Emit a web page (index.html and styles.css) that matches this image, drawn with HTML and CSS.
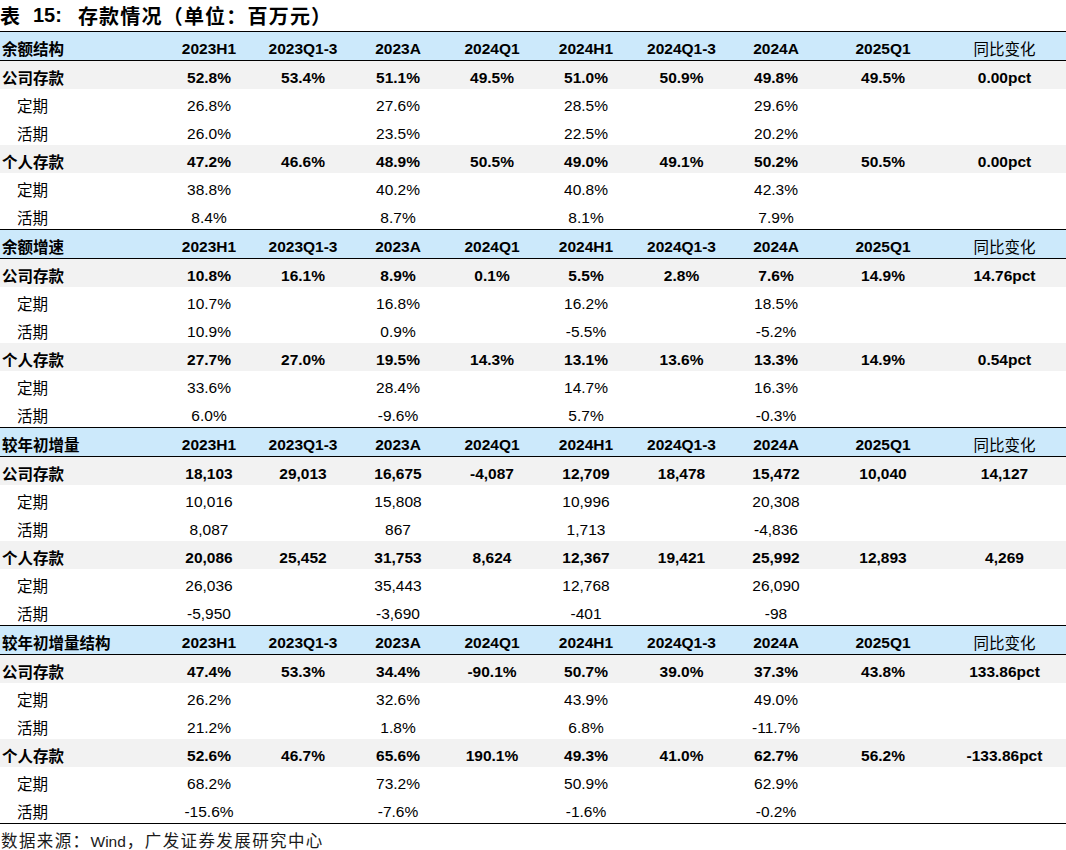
FILE: index.html
```html
<!DOCTYPE html>
<html lang="zh">
<head>
<meta charset="utf-8">
<title>存款情况</title>
<link rel="stylesheet" href="styles.css">
</head>
<body>
<div class="page">
  <div class="title"><span class="t-k">表</span><span class="t-n">15:</span><span class="t-t">存款情况（单位：百万元）</span></div>
  <div class="table">
    <div class="section">
      <div class="row head"><div class="lab">余额结构</div><div>2023H1</div><div>2023Q1-3</div><div>2023A</div><div>2024Q1</div><div>2024H1</div><div>2024Q1-3</div><div>2024A</div><div>2025Q1</div><div class="cjk">同比变化</div></div>
      <div class="row main"><div class="lab">公司存款</div><div>52.8%</div><div>53.4%</div><div>51.1%</div><div>49.5%</div><div>51.0%</div><div>50.9%</div><div>49.8%</div><div>49.5%</div><div>0.00pct</div></div>
      <div class="row sub"><div class="lab">定期</div><div>26.8%</div><div></div><div>27.6%</div><div></div><div>28.5%</div><div></div><div>29.6%</div><div></div><div></div></div>
      <div class="row sub"><div class="lab">活期</div><div>26.0%</div><div></div><div>23.5%</div><div></div><div>22.5%</div><div></div><div>20.2%</div><div></div><div></div></div>
      <div class="row main"><div class="lab">个人存款</div><div>47.2%</div><div>46.6%</div><div>48.9%</div><div>50.5%</div><div>49.0%</div><div>49.1%</div><div>50.2%</div><div>50.5%</div><div>0.00pct</div></div>
      <div class="row sub"><div class="lab">定期</div><div>38.8%</div><div></div><div>40.2%</div><div></div><div>40.8%</div><div></div><div>42.3%</div><div></div><div></div></div>
      <div class="row sub"><div class="lab">活期</div><div>8.4%</div><div></div><div>8.7%</div><div></div><div>8.1%</div><div></div><div>7.9%</div><div></div><div></div></div>
    </div>
    <div class="section">
      <div class="row head"><div class="lab">余额增速</div><div>2023H1</div><div>2023Q1-3</div><div>2023A</div><div>2024Q1</div><div>2024H1</div><div>2024Q1-3</div><div>2024A</div><div>2025Q1</div><div class="cjk">同比变化</div></div>
      <div class="row main"><div class="lab">公司存款</div><div>10.8%</div><div>16.1%</div><div>8.9%</div><div>0.1%</div><div>5.5%</div><div>2.8%</div><div>7.6%</div><div>14.9%</div><div>14.76pct</div></div>
      <div class="row sub"><div class="lab">定期</div><div>10.7%</div><div></div><div>16.8%</div><div></div><div>16.2%</div><div></div><div>18.5%</div><div></div><div></div></div>
      <div class="row sub"><div class="lab">活期</div><div>10.9%</div><div></div><div>0.9%</div><div></div><div>-5.5%</div><div></div><div>-5.2%</div><div></div><div></div></div>
      <div class="row main"><div class="lab">个人存款</div><div>27.7%</div><div>27.0%</div><div>19.5%</div><div>14.3%</div><div>13.1%</div><div>13.6%</div><div>13.3%</div><div>14.9%</div><div>0.54pct</div></div>
      <div class="row sub"><div class="lab">定期</div><div>33.6%</div><div></div><div>28.4%</div><div></div><div>14.7%</div><div></div><div>16.3%</div><div></div><div></div></div>
      <div class="row sub"><div class="lab">活期</div><div>6.0%</div><div></div><div>-9.6%</div><div></div><div>5.7%</div><div></div><div>-0.3%</div><div></div><div></div></div>
    </div>
    <div class="section">
      <div class="row head"><div class="lab">较年初增量</div><div>2023H1</div><div>2023Q1-3</div><div>2023A</div><div>2024Q1</div><div>2024H1</div><div>2024Q1-3</div><div>2024A</div><div>2025Q1</div><div class="cjk">同比变化</div></div>
      <div class="row main"><div class="lab">公司存款</div><div>18,103</div><div>29,013</div><div>16,675</div><div>-4,087</div><div>12,709</div><div>18,478</div><div>15,472</div><div>10,040</div><div>14,127</div></div>
      <div class="row sub"><div class="lab">定期</div><div>10,016</div><div></div><div>15,808</div><div></div><div>10,996</div><div></div><div>20,308</div><div></div><div></div></div>
      <div class="row sub"><div class="lab">活期</div><div>8,087</div><div></div><div>867</div><div></div><div>1,713</div><div></div><div>-4,836</div><div></div><div></div></div>
      <div class="row main"><div class="lab">个人存款</div><div>20,086</div><div>25,452</div><div>31,753</div><div>8,624</div><div>12,367</div><div>19,421</div><div>25,992</div><div>12,893</div><div>4,269</div></div>
      <div class="row sub"><div class="lab">定期</div><div>26,036</div><div></div><div>35,443</div><div></div><div>12,768</div><div></div><div>26,090</div><div></div><div></div></div>
      <div class="row sub"><div class="lab">活期</div><div>-5,950</div><div></div><div>-3,690</div><div></div><div>-401</div><div></div><div>-98</div><div></div><div></div></div>
    </div>
    <div class="section">
      <div class="row head"><div class="lab">较年初增量结构</div><div>2023H1</div><div>2023Q1-3</div><div>2023A</div><div>2024Q1</div><div>2024H1</div><div>2024Q1-3</div><div>2024A</div><div>2025Q1</div><div class="cjk">同比变化</div></div>
      <div class="row main"><div class="lab">公司存款</div><div>47.4%</div><div>53.3%</div><div>34.4%</div><div>-90.1%</div><div>50.7%</div><div>39.0%</div><div>37.3%</div><div>43.8%</div><div>133.86pct</div></div>
      <div class="row sub"><div class="lab">定期</div><div>26.2%</div><div></div><div>32.6%</div><div></div><div>43.9%</div><div></div><div>49.0%</div><div></div><div></div></div>
      <div class="row sub"><div class="lab">活期</div><div>21.2%</div><div></div><div>1.8%</div><div></div><div>6.8%</div><div></div><div>-11.7%</div><div></div><div></div></div>
      <div class="row main"><div class="lab">个人存款</div><div>52.6%</div><div>46.7%</div><div>65.6%</div><div>190.1%</div><div>49.3%</div><div>41.0%</div><div>62.7%</div><div>56.2%</div><div>-133.86pct</div></div>
      <div class="row sub"><div class="lab">定期</div><div>68.2%</div><div></div><div>73.2%</div><div></div><div>50.9%</div><div></div><div>62.9%</div><div></div><div></div></div>
      <div class="row sub"><div class="lab">活期</div><div>-15.6%</div><div></div><div>-7.6%</div><div></div><div>-1.6%</div><div></div><div>-0.2%</div><div></div><div></div></div>
    </div>
  </div>
  <div class="source"><span class="s-c">数据来源：</span><span class="s-l">Wind</span><span class="s-c">，广发证券发展研究中心</span></div>
</div>
</body>
</html>
```
FILE: styles.css
```css
html, body {
  margin: 0;
  padding: 0;
  background: #ffffff;
}

body {
  font-family: "Liberation Sans", "Noto Sans CJK SC", sans-serif;
  color: #000000;
}

.page {
  width: 1066px;
}

.title {
  height: 31px;
  line-height: 31px;
  font-size: 20px;
  font-weight: bold;
  white-space: nowrap;
  display: flex;
  align-items: center;
}

.t-k {
  font-family: "Noto Sans CJK SC", sans-serif;
}

.t-n {
  font-family: "Liberation Sans", sans-serif;
  margin-left: 13px;
}

.t-t {
  font-family: "Noto Sans CJK SC", sans-serif;
  margin-left: 16px;
  letter-spacing: 1.2px;
}

.table {
  border-bottom: 1px solid #000000;
}

.row {
  display: grid;
  grid-template-columns: 162px 94px 94px 96px 92px 96px 95px 94px 120px 1fr;
  height: 23px;
  padding-top: 5px;
  align-items: center;
  text-align: center;
  font-size: 15.5px;
  white-space: nowrap;
}

.row > div {
  line-height: 23px;
}

.head {
  background: #cce9fb;
  border-top: 1px solid #000000;
  border-bottom: 1px solid #000000;
  font-weight: bold;
}

.main {
  background: #f2f2f2;
  font-weight: bold;
}

.sub {
  background: #ffffff;
  font-weight: normal;
}

.lab {
  text-align: left;
  padding-left: 2px;
  font-family: "Noto Sans CJK SC", sans-serif;
}

.head .lab,
.main .lab {
  font-weight: bold;
}

.sub .lab {
  padding-left: 17px;
  font-weight: normal;
}

.cjk {
  font-family: "Noto Sans CJK SC", sans-serif;
  font-weight: normal;
}

.source {
  height: 26px;
  line-height: 32px;
  padding-left: 1px;
  color: #1a1a1a;
  white-space: nowrap;
}

.s-c {
  font-family: "Noto Sans CJK SC", sans-serif;
  font-size: 16.5px;
  letter-spacing: 1.4px;
}

.s-l {
  font-family: "Liberation Sans", sans-serif;
  font-size: 15.5px;
  margin-right: 1px;
}
```
